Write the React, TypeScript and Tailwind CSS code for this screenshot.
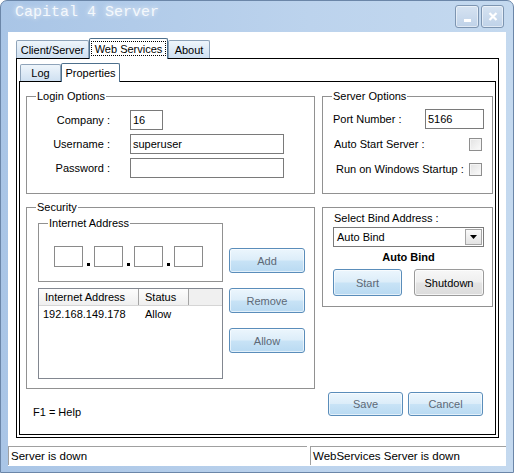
import React from "react";

const ui = "font-['Liberation_Sans',Arial,sans-serif] text-[11px] leading-[14px] text-black";

function GroupBox({
  label,
  className = "",
  children,
}: {
  label?: string;
  className?: string;
  children?: React.ReactNode;
}) {
  return (
    <div className={`relative border border-[#919191] ${className}`}>
      {label && (
        <span className="absolute left-[9px] top-[-8px] bg-white px-[1px] leading-[14px]">
          {label}
        </span>
      )}
      {children}
    </div>
  );
}

function Field({ className = "", value = "" }: { className?: string; value?: string }) {
  return (
    <div
      className={`flex h-[20px] items-center border border-[#7a7a7a] bg-white pl-[2px] ${className}`}
    >
      {value}
    </div>
  );
}

function CheckBox() {
  return (
    <div className="h-[13px] w-[13px] border border-[#8e8e8e] bg-[linear-gradient(135deg,#e2e2e2,#fbfbfb)] shadow-[inset_0_0_0_1px_#f4f4f4]" />
  );
}

function BlueButton({ label, className = "" }: { label: string; className?: string }) {
  return (
    <div
      className={`flex items-center justify-center rounded-[3px] border border-[#5a8dba] bg-[linear-gradient(#ecf6fd,#dcedf9_48%,#c8e3f6_52%,#b9daf2)] text-[#5d6976] shadow-[inset_0_0_0_1px_rgba(255,255,255,0.6)] ${className}`}
    >
      {label}
    </div>
  );
}

function GrayButton({ label, className = "" }: { label: string; className?: string }) {
  return (
    <div
      className={`flex items-center justify-center rounded-[3px] border border-[#9a9a9a] bg-[linear-gradient(#f7f7f7,#efefef_48%,#e4e4e4_52%,#dcdcdc)] text-black shadow-[inset_0_0_0_1px_rgba(255,255,255,0.7)] ${className}`}
    >
      {label}
    </div>
  );
}

function Tab({ label, width, height }: { label: string; width: number; height: number }) {
  return (
    <div
      style={{ width, height }}
      className="flex items-center justify-center rounded-t-[2px] border border-b-0 border-[#8ea3b9] bg-[linear-gradient(#eef5fb,#cfe0f1)]"
    >
      {label}
    </div>
  );
}

function IpBox() {
  return <div className="h-[21px] w-[29px] border border-[#8a8a8a] bg-white" />;
}

function IpDot() {
  return (
    <div className="flex h-[21px] w-[11px] items-end pb-[1px] pl-[4px]">
      <div className="h-[3px] w-[3px] bg-black" />
    </div>
  );
}

export default function App() {
  return (
    <div
      className={`${ui} flex h-[473px] w-[514px] flex-col rounded-t-[7px] border border-[#6b86a8] bg-[linear-gradient(90deg,#a9c5e6,#bcd3ed_60%,#c4d9ef)] px-[7px] pb-[6px]`}
    >
      {/* title bar */}
      <div className="flex h-[31px] shrink-0 items-start justify-between">
        <div className="pl-[7px] pt-[3px] font-['Liberation_Mono','Courier_New',monospace] text-[15px] leading-[18px] text-[#f4f8fc] [text-shadow:0_0_5px_rgba(255,255,255,0.9)]">
          Capital 4 Server
        </div>
        <div className="mr-[2px] mt-[4px] flex gap-[2px]">
          <div className="flex h-[23px] w-[24px] items-start justify-center rounded-[3px] border border-[#7d95b1] bg-[linear-gradient(#d6e3f2,#bfd2e8)] shadow-[inset_0_0_0_1px_rgba(255,255,255,0.5)]">
            <div className="mt-[13px] h-[3px] w-[7px] bg-white" />
          </div>
          <div className="flex h-[23px] w-[23px] items-start justify-center rounded-[3px] border border-[#7d95b1] bg-[linear-gradient(#d6e3f2,#bfd2e8)] shadow-[inset_0_0_0_1px_rgba(255,255,255,0.5)]">
            <svg width="10" height="9" viewBox="0 0 10 9" className="mt-[6px]">
              <path d="M1.5 1 L8.5 8 M8.5 1 L1.5 8" stroke="#ffffff" strokeWidth="2.2" />
            </svg>
          </div>
        </div>
      </div>

      {/* client area */}
      <div className="flex flex-1 flex-col bg-white pt-[6px]">
        <div className="ml-[8px] flex h-[20px] items-end">
          <Tab label="Client/Server" width={73} height={18} />
          <div className="relative z-10 mb-[-1px] flex h-[21px] w-[79px] flex-col items-center rounded-t-[2px] border border-b-0 border-[#4d6f8c] bg-white pt-[2px]">
            <span className="flex h-[15px] w-[75px] items-center justify-center border border-dotted border-black">
              Web Services
            </span>
          </div>
          <Tab label="About" width={42} height={18} />
        </div>

        {/* outer tab page */}
        <div className="ml-[8px] h-[380px] w-[483px] border border-black px-[1px] pb-[2px]">
          <div className="ml-[1px] flex h-[22px] items-end">
            <div className="ml-[1px]">
              <Tab label="Log" width={41} height={17} />
            </div>
            <div className="relative z-10 mb-[-1px] flex h-[19px] w-[59px] items-center justify-center rounded-t-[2px] border border-b-0 border-[#4d6f8c] bg-white">
              Properties
            </div>
          </div>

          {/* inner tab page */}
          <div className="ml-[1px] h-[354px] w-[477px] border border-black pl-[6px] pt-[14px]">
            <div className="flex gap-[7px]">
              <GroupBox label="Login Options" className="h-[98px] w-[289px]">
                <div className="flex flex-col gap-[4px] pt-[13px]">
                  <div className="flex items-center">
                    <div className="w-[83px] text-right">Company :</div>
                    <Field className="ml-[20px] w-[33px]" value="16" />
                  </div>
                  <div className="flex items-center">
                    <div className="w-[83px] text-right">Username :</div>
                    <Field className="ml-[20px] w-[154px]" value="superuser" />
                  </div>
                  <div className="flex items-center">
                    <div className="w-[83px] text-right">Password :</div>
                    <Field className="ml-[20px] w-[154px]" />
                  </div>
                </div>
              </GroupBox>

              <GroupBox label="Server Options" className="h-[98px] w-[171px]">
                <div className="mt-[12px] flex h-[20px] items-center justify-between pl-[10px] pr-[8px]">
                  <span>Port Number :</span>
                  <Field className="w-[59px]" value="5166" />
                </div>
                <div className="mt-[8px] flex h-[14px] items-center justify-between pl-[11px] pr-[10px]">
                  <span>Auto Start Server :</span>
                  <CheckBox />
                </div>
                <div className="mt-[11px] flex h-[14px] items-center justify-between pl-[13px] pr-[10px]">
                  <span>Run on Windows Startup :</span>
                  <CheckBox />
                </div>
              </GroupBox>
            </div>

            <div className="mt-[13px] flex gap-[7px]">
              <div className="flex w-[289px] flex-col">
                <GroupBox label="Security" className="h-[182px] w-[289px]">
                  <div className="flex">
                    <div className="ml-[11px] mt-[15px] flex flex-col">
                      <GroupBox label="Internet Address" className="h-[59px] w-[185px]">
                        <div className="mt-[22px] flex pl-[15px]">
                          <IpBox />
                          <IpDot />
                          <IpBox />
                          <IpDot />
                          <IpBox />
                          <IpDot />
                          <IpBox />
                        </div>
                      </GroupBox>

                      <div className="mt-[6px] h-[91px] w-[185px] border border-[#828790] bg-white">
                        <div className="flex h-[17px] border-b border-[#d5d5d5] bg-[linear-gradient(#fdfdfd,#efefef)]">
                          <div className="flex w-[100px] items-center border-r border-[#a5a5a5] pl-[6px]">
                            Internet Address
                          </div>
                          <div className="flex w-[50px] items-center border-r border-[#a5a5a5] pl-[6px]">
                            Status
                          </div>
                          <div className="flex-1 bg-[#f0f0f0]" />
                        </div>
                        <div className="flex h-[16px] items-center">
                          <div className="w-[100px] pl-[4px]">192.168.149.178</div>
                          <div className="pl-[6px]">Allow</div>
                        </div>
                      </div>
                    </div>

                    <div className="ml-[6px] flex flex-col gap-[15px] pt-[40px]">
                      <BlueButton label="Add" className="h-[25px] w-[76px]" />
                      <BlueButton label="Remove" className="h-[25px] w-[76px]" />
                      <BlueButton label="Allow" className="h-[25px] w-[76px]" />
                    </div>
                  </div>
                </GroupBox>
                <div className="ml-[7px] mt-[16px]">F1 = Help</div>
              </div>

              <div className="flex w-[171px] flex-col">
                <GroupBox className="h-[100px] w-[171px]">
                  <div className="ml-[11px] mt-[3px]">Select Bind Address :</div>
                  <div className="ml-[10px] mt-[2px] flex h-[20px] w-[151px] items-center justify-between border border-[#7a7a7a] bg-white pl-[3px] pr-[1px]">
                    <span>Auto Bind</span>
                    <div className="flex h-[16px] w-[17px] items-center justify-center border border-[#a5a5a5] bg-[linear-gradient(#fafafa,#e3e3e3)]">
                      <svg width="7" height="4" viewBox="0 0 7 4">
                        <polygon points="0,0 7,0 3.5,4" fill="#000000" />
                      </svg>
                    </div>
                  </div>
                  <div className="ml-[10px] mt-[3px] w-[151px] text-center font-bold">Auto Bind</div>
                  <div className="ml-[10px] mt-[5px] flex gap-[12px]">
                    <BlueButton label="Start" className="h-[27px] w-[69px]" />
                    <GrayButton label="Shutdown" className="h-[27px] w-[70px]" />
                  </div>
                </GroupBox>
                <div className="ml-[6px] mt-[85px] flex gap-[5px]">
                  <BlueButton label="Save" className="h-[24px] w-[75px]" />
                  <BlueButton label="Cancel" className="h-[24px] w-[75px]" />
                </div>
              </div>
            </div>
          </div>
        </div>

        {/* status bar */}
        <div className="mb-[1px] mt-auto flex h-[19px] text-[11.5px]">
          <div className="flex w-[299px] items-center border-l border-t border-[#a0a0a0] pl-[2px]">
            Server is down
          </div>
          <div className="ml-[3px] flex flex-1 items-center border-l border-t border-[#a0a0a0] pl-[2px]">
            WebServices Server is down
          </div>
        </div>
      </div>
    </div>
  );
}
